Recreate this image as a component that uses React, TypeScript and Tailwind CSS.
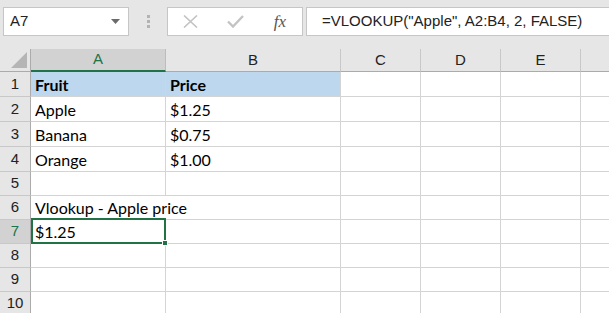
import React from "react";

const cols = [
  { id: "A", w: "w-[135px]" },
  { id: "B", w: "w-[175px]" },
  { id: "C", w: "w-[80px]" },
  { id: "D", w: "w-[80px]" },
  { id: "E", w: "w-[80px]" },
  { id: "", w: "w-[80px]" },
];

type Cell = { text?: string; bold?: boolean; blue?: boolean; noRight?: boolean };

const rows: { n: number; h: string; cells: Record<string, Cell> }[] = [
  { n: 1, h: "h-[25px]", cells: { A: { text: "Fruit", bold: true, blue: true }, B: { text: "Price", bold: true, blue: true } } },
  { n: 2, h: "h-[25px]", cells: { A: { text: "Apple" }, B: { text: "$1.25" } } },
  { n: 3, h: "h-[25px]", cells: { A: { text: "Banana" }, B: { text: "$0.75" } } },
  { n: 4, h: "h-[25px]", cells: { A: { text: "Orange" }, B: { text: "$1.00" } } },
  { n: 5, h: "h-[24px]", cells: {} },
  { n: 6, h: "h-[24px]", cells: { A: { text: "Vlookup - Apple price", noRight: true } } },
  { n: 7, h: "h-[24px]", cells: { A: { text: "$1.25" } } },
  { n: 8, h: "h-[24px]", cells: {} },
  { n: 9, h: "h-[24px]", cells: {} },
  { n: 10, h: "h-[24px]", cells: {} },
];

const ui = "font-['Liberation_Sans',Arial,sans-serif]";
const cellFont = "font-['Lato',sans-serif]";

const Toolbar = () => (
  <div className="h-[49px] flex items-start pt-[7px] pl-[3px]">
    <div className="w-[126px] h-[29px] bg-white border border-[#c6c6c6] flex items-center justify-between pl-[6px] pr-[8px]">
      <span className={`${ui} text-[15px] text-[#222]`}>A7</span>
      <svg width="9" height="5" viewBox="0 0 9 5">
        <path d="M0 0 H9 L4.5 5 Z" fill="#6b6b6b" />
      </svg>
    </div>
    <div className="w-[38px] h-[29px] flex flex-col items-center justify-center gap-[2px]">
      <div className="w-[3px] h-[3px] bg-[#b3b3b3]" />
      <div className="w-[3px] h-[3px] bg-[#b3b3b3]" />
      <div className="w-[3px] h-[3px] bg-[#b3b3b3]" />
    </div>
    <div className="w-[136px] h-[29px] bg-white border border-[#c6c6c6] flex items-center">
      <div className="w-[44px] flex justify-center">
        <svg width="15" height="13" viewBox="0 0 15 13">
          <path d="M1 0.5 L14 12.5 M14 0.5 L1 12.5" stroke="#c3c3c3" strokeWidth="1.6" />
        </svg>
      </div>
      <div className="w-[46px] flex justify-center">
        <svg width="17" height="13" viewBox="0 0 17 13">
          <path d="M1 6.5 L6 11.5 L16 1" stroke="#c3c3c3" strokeWidth="2.4" fill="none" />
        </svg>
      </div>
      <div className="w-[44px] flex justify-center">
        <span className="font-['Liberation_Serif',serif] italic text-[17px] text-[#555] leading-none">fx</span>
      </div>
    </div>
    <div className="ml-[3px] flex-1 h-[29px] bg-white border border-[#c6c6c6] border-r-0 flex items-center pl-[15px]">
      <span className={`${ui} text-[15px] text-[#222] whitespace-nowrap`}>=VLOOKUP("Apple", A2:B4, 2, FALSE)</span>
    </div>
  </div>
);

const HeaderRow = () => (
  <div className="flex h-[23px]">
    <div className="w-[31px] shrink-0 border-r border-b border-[#ababab] flex items-end justify-end pr-[3px] pb-[3px]">
      <svg width="16" height="16" viewBox="0 0 16 16">
        <path d="M16 0 V16 H0 Z" fill="#b5b5b5" />
      </svg>
    </div>
    {cols.map((c, i) =>
      c.id === "A" ? (
        <div
          key={i}
          className={`${c.w} shrink-0 bg-[#d2d2d2] border-r border-[#bcbcbc] border-b-2 border-b-[#217346] flex items-center justify-center ${ui} text-[15px] text-[#217346]`}
        >
          {c.id}
        </div>
      ) : (
        <div
          key={i}
          className={`${c.w} shrink-0 border-r border-[#c8c8c8] border-b border-b-[#ababab] flex items-center justify-center ${ui} text-[15px] text-[#222]`}
        >
          {c.id}
        </div>
      )
    )}
  </div>
);

const App = () => {
  return (
    <div className="w-[609px] h-[313px] overflow-hidden bg-[#e6e6e6]">
      <Toolbar />
      <HeaderRow />
      {rows.map((r) => {
        const sel = r.n === 7;
        return (
          <div key={r.n} className={`flex ${r.h}`}>
            <div
              className={`w-[31px] shrink-0 border-r border-r-[#ababab] border-b border-b-[#c8c8c8] flex items-center justify-center ${ui} text-[15px] ${
                sel ? "bg-[#d2d2d2] text-[#217346]" : "bg-[#e6e6e6] text-[#222]"
              }`}
            >
              {r.n}
            </div>
            {cols.map((c, i) => {
              const cell = r.cells[c.id] || {};
              const isSel = sel && c.id === "A";
              return (
                <div
                  key={i}
                  className={`${c.w} shrink-0 relative border-b border-[#d4d4d4] ${cell.noRight ? "" : "border-r"} ${
                    cell.blue ? "bg-[#bdd7ee]" : "bg-white"
                  } flex items-end pl-[4px] pb-[1px] ${cellFont} text-[16px] leading-[20px] text-black whitespace-nowrap overflow-visible ${
                    cell.noRight || isSel ? "z-10" : ""
                  } ${cell.bold ? "font-bold" : ""}`}
                >
                  {cell.text}
                  {isSel && (
                    <div className="absolute left-0 top-[-2px] right-[-1px] bottom-[-1px] border-2 border-[#217346] pointer-events-none">
                      <div className="absolute right-[-4px] bottom-[-4px] w-[6px] h-[6px] bg-[#217346] border border-white" />
                    </div>
                  )}
                </div>
              );
            })}
          </div>
        );
      })}
    </div>
  );
};

export default App;
